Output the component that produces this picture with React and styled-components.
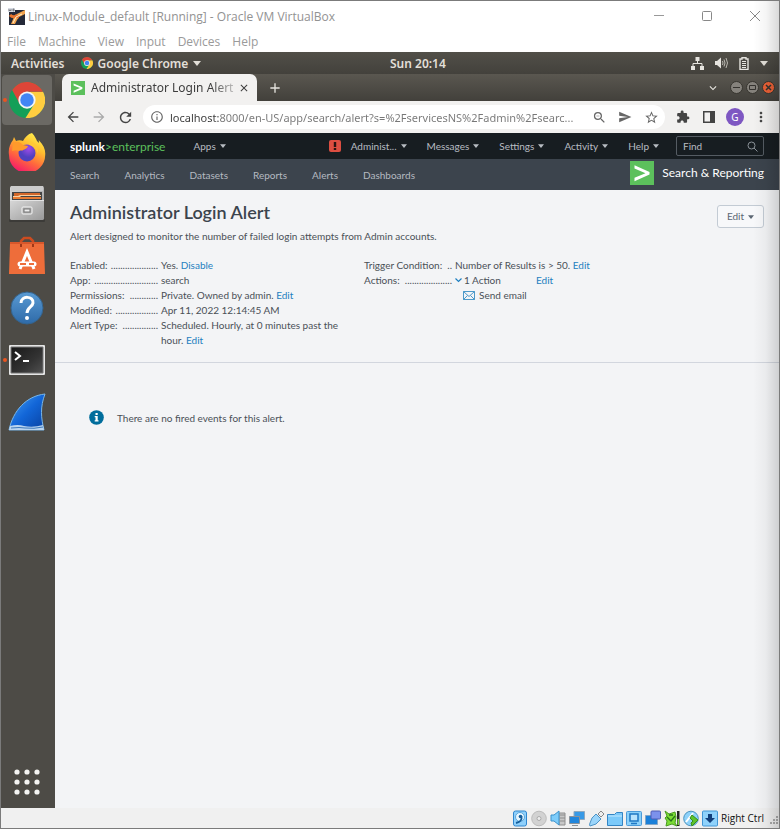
import React from "react";
import styled, { createGlobalStyle, css } from "styled-components";
import {
  MdArrowBack,
  MdArrowForward,
  MdRefresh,
  MdInfoOutline,
  MdZoomOut,
  MdSend,
  MdStarBorder,
  MdExtension,
  MdMoreVert,
  MdExpandMore,
  MdAdd,
  MdClose,
} from "react-icons/md";

const system = `"Open Sans", "Noto Sans", sans-serif`;
const ubuntu = `"Noto Sans", "Open Sans", sans-serif`;
const splunk = `Lato, "Open Sans", sans-serif`;

const GlobalStyle = createGlobalStyle`
  * { box-sizing: border-box; }
  body { margin: 0; background: #f0f0f0; }
  button, input { font: inherit; color: inherit; border: 0; padding: 0; margin: 0; background: none; }
  button { cursor: pointer; white-space: nowrap; }
  svg { display: block; flex: none; }
  h1, p, dl, dd, dt { margin: 0; font-weight: inherit; }
`;

/* ---------- virtual machine window ---------- */

const Window = styled.div`
  position: relative;
  display: flex;
  flex-direction: column;
  min-height: 100vh;
  border: 1px solid #7b7b7b;
  background: #fff;
  font-family: ${system};
`;

const EdgeShade = styled.div`
  position: absolute;
  inset: 0 0 0 auto;
  width: 26px;
  pointer-events: none;
  background: linear-gradient(to right, transparent, rgba(0, 0, 0, 0.04) 50%, rgba(0, 0, 0, 0.15));
`;

const TitleBar = styled.header`
  display: flex;
  align-items: center;
  height: 30px;
  padding: 0 18px 0 7px;
  gap: 3px;
  font-size: 12px;
  color: #929292;
`;

const TitleText = styled.span`
  flex: 1;
  white-space: nowrap;
`;

const WindowControls = styled.div`
  display: flex;
  gap: 36px;
  button { display: flex; }
`;

const MenuBar = styled.nav`
  display: flex;
  align-items: center;
  height: 21px;
  padding: 0 6px;
  gap: 12px;
  font-size: 12px;
  color: #9a9a9a;
`;

/* ---------- desktop ---------- */

const TopPanel = styled.div`
  display: grid;
  grid-template-columns: 1fr auto 0.85fr;
  align-items: center;
  height: 22px;
  padding: 0 11px 0 10px;
  background: linear-gradient(#514f48, #43413c);
  color: #e2dfd8;
  font: 600 12px ${ubuntu};
`;

const PanelGroup = styled.div`
  display: flex;
  align-items: center;
  gap: ${(p) => p.$gap}px;
  justify-content: ${(p) => (p.$end ? "flex-end" : "flex-start")};
`;

const PanelButton = styled.button`
  display: flex;
  align-items: center;
  gap: 5px;
`;

const Desktop = styled.div`
  display: flex;
  flex: 1;
`;

const Dock = styled.nav`
  display: flex;
  flex-direction: column;
  flex: none;
  width: 54px;
  padding: 1px 3px 1px 1px;
  gap: 2px;
  background: #4d4b46;
`;

const DockItem = styled.button`
  position: relative;
  display: flex;
  align-items: center;
  justify-content: center;
  height: 50px;
  border-radius: 4px;
  ${(p) => p.$active && css`background: #6b6964;`}
  ${(p) =>
    p.$running &&
    css`
      &::before {
        content: "";
        position: absolute;
        left: 1px;
        width: 4px;
        height: 4px;
        border-radius: 50%;
        background: #e95420;
      }
    `}
`;

const DockSpacer = styled.div`
  flex: 1;
`;

/* ---------- browser ---------- */

const Browser = styled.main`
  display: flex;
  flex-direction: column;
  flex: 1;
  min-width: 0;
  background: #f3f4f6;
`;

const TabStrip = styled.div`
  display: flex;
  align-items: center;
  height: 27px;
  padding: 0 4px 0 7px;
  background: linear-gradient(#5a5750, #42403b);
  color: #e6e4df;
`;

const Tab = styled.div`
  display: flex;
  align-items: center;
  width: 195px;
  height: 27px;
  padding: 0 7px 0 9px;
  border-radius: 7px 7px 0 0;
  background: #f2f1f0;
  color: #3d3d3d;
  font: 12px ${ubuntu};
`;

const TabTitle = styled.span`
  flex: 1;
  margin-left: 6px;
  white-space: nowrap;
  mask-image: linear-gradient(to right, #000 82%, rgba(0, 0, 0, 0.15));
`;

const IconButton = styled.button`
  display: flex;
  flex: none;
`;

const NewTab = styled(IconButton)`
  margin: 0 auto 0 10px;
`;

const FrameControls = styled.div`
  display: flex;
  align-items: center;
  gap: 3px;
  margin-left: 10px;
`;

const FrameButton = styled.button`
  display: flex;
  align-items: center;
  justify-content: center;
  width: 13px;
  height: 13px;
  border-radius: 50%;
  border: 1px solid #37352f;
  background: ${(p) => (p.$close ? "#ea6036" : "#85827c")};
  color: #35332f;
`;

const Toolbar = styled.div`
  display: flex;
  align-items: center;
  height: 32px;
  padding: 0 5px;
  gap: 5px;
  background: #f2f1f0;
  color: #444;
`;

const ToolGroup = styled.div`
  display: grid;
  grid-auto-flow: column;
  grid-auto-columns: 26px;
  align-items: center;
  justify-items: center;
`;

const AddressBar = styled.div`
  display: flex;
  align-items: center;
  flex: 1;
  min-width: 0;
  height: 24px;
  padding: 0 1px 0 7px;
  gap: 6px;
  border-radius: 12px;
  background: #fff;
  color: #666;
`;

const AddressInput = styled.input`
  flex: 1;
  min-width: 0;
  font: 11px ${ubuntu};
  background: linear-gradient(to right, #3a3a3a 49px, #777 49px);
  background-clip: text;
  -webkit-text-fill-color: transparent;
  outline: 0;
`;

const Profile = styled.button`
  width: 18px;
  height: 18px;
  border-radius: 50%;
  background: #7e57c2;
  color: #fff;
  font: 10px/18px ${ubuntu};
`;

/* ---------- splunk ---------- */

const SplunkBar = styled.div`
  display: flex;
  align-items: center;
  height: 26px;
  padding: 0 15px;
  background: #171d21;
  color: #b8bcc2;
  font: 10px ${splunk};
`;

const Logo = styled.a`
  display: flex;
  color: #fff;
  font: 700 12px ${splunk};
  text-decoration: none;
  margin-right: 28px;
  span { color: #5cc05c; font-weight: 400; }
`;

const BarMenus = styled.div`
  display: flex;
  align-items: center;
  gap: 20px;
  margin: 0 17px 0 auto;
`;

const DropButton = styled.button`
  display: flex;
  align-items: center;
  gap: 4px;
  white-space: nowrap;
`;

const Warning = styled.span`
  display: flex;
  align-items: center;
  justify-content: center;
  width: 12px;
  height: 12px;
  margin-right: -10px;
  border-radius: 2px;
  background: #dc4e41;
`;

const FindBox = styled.label`
  display: flex;
  align-items: center;
  width: 88px;
  height: 20px;
  padding: 0 5px 0 6px;
  border: 1px solid #555c63;
  border-radius: 2px;
  input { flex: 1; min-width: 0; outline: 0; }
  input::placeholder { color: #b8bcc2; opacity: 1; }
`;

const AppNav = styled.nav`
  display: flex;
  align-items: center;
  height: 31px;
  padding: 0 15px;
  gap: 25px;
  background: #3c444d;
  font: 10px ${splunk};
  a { color: #b5bac1; text-decoration: none; }
`;

const AppName = styled.div`
  display: flex;
  align-items: center;
  gap: 8px;
  margin: -4px 0 0 auto;
  color: #fff;
  font-size: 12px;
`;

const AlertHeader = styled.section`
  padding: 12px 15px 14px 15px;
  border-bottom: 1px solid #d2d6de;
  color: #4a5057;
  font: 10px/15px ${splunk};
`;

const HeadingRow = styled.div`
  display: flex;
  justify-content: space-between;
  align-items: flex-start;
`;

const Heading = styled.h1`
  color: #3c444d;
  font: 600 18px/20px ${splunk};
`;

const EditButton = styled(DropButton)`
  justify-content: center;
  width: 47px;
  height: 23px;
  margin-top: 3px;
  border: 1px solid #c3cbd4;
  border-radius: 3px;
  background: #f7f8fa;
  color: #5c6773;
`;

const Description = styled.p`
  margin: 1px 0 14px;
`;

const Details = styled.div`
  display: grid;
  grid-template-columns: 294px 1fr;
  align-items: start;
`;

const DetailList = styled.dl`
  display: grid;
  grid-template-columns: 88px minmax(0, 190px);
  column-gap: 3px;
`;

const Term = styled.dt`
  display: flex;
  justify-content: space-between;
  white-space: nowrap;
`;

const Link = styled.a`
  color: #1e7fc0;
  text-decoration: none;
`;

const ActionLine = styled.div`
  display: flex;
  align-items: center;
  gap: 2px;
`;

const ActionName = styled.span`
  width: 70px;
`;

const EmailLine = styled(ActionLine)`
  padding-left: 8px;
  gap: 4px;
`;

const EmptyNotice = styled.div`
  display: flex;
  align-items: center;
  gap: 13px;
  padding: 47px 34px;
  color: #4a5057;
  font: 10px ${splunk};
`;

/* ---------- status bar ---------- */

const StatusBar = styled.footer`
  display: flex;
  align-items: center;
  justify-content: flex-end;
  height: 20px;
  gap: 3px;
  background: #f0f0f0;
  color: #111;
  font-size: 10px;
`;

const HostKey = styled.span`
  margin-right: 3px;
`;

/* ---------- drawings ---------- */

const Caret = ({ size = 6 }) => (
  <svg width={size} height={size / 2 + 1} viewBox="0 0 8 5" fill="currentColor">
    <path d="M0 0h8L4 5z" />
  </svg>
);

const ChromeIcon = ({ size }) => (
  <svg width={size} height={size} viewBox="0 0 48 48">
    <circle cx="24" cy="24" r="24" fill="#149f58" />
    <path d="M24 13H45.4A24 24 0 0 1 22 48L33.5 29.5z" fill="#ffcd40" />
    <path d="M24 13H45.4A24 24 0 0 0 4.2 10.5L14.5 29.5z" fill="#dd4538" />
    <circle cx="24" cy="24" r="11.5" fill="#f4f4f4" />
    <circle cx="24" cy="24" r="9" fill="#4285f4" />
  </svg>
);

const SplunkTile = ({ size }) => (
  <svg width={size} height={size} viewBox="0 0 24 24">
    <path fill="#5cc05c" d="M0 0h24v24H0z" />
    <path d="M4.500 4.200v3.400L15.500 12.200 4.500 16.800v3.400L19.500 13.500v-2.600z" fill="#fff" />
  </svg>
);

const VirtualBoxIcon = () => (
  <svg width="17" height="17" viewBox="0 0 17 17">
    <path fill="#242938" d="M1 2h16v15H1z" />
    <path d="M3 16 6 9l3-3 8-4v4l-6 3-2 3-2 4z" fill="#f3a44e" />
    <path d="M2 7q3 3 6 1l3 1" stroke="#e8752e" strokeWidth="3" fill="none" />
    <path d="m5 15 3-6 6-3" stroke="#fff0cb" fill="none" />
    <path fill="#d6dbe4" d="M0 0h7v4H0z" />
    <path d="M1 1v2l1-1 1 1V1m2 0h1v2H5z" stroke="#555" strokeWidth=".6" fill="none" />
  </svg>
);

const FirefoxIcon = () => (
  <svg width="38" height="38" viewBox="0 0 38 38">
    <defs>
      <linearGradient id="fox" x1=".8" y1="0" x2=".3" y2="1">
        <stop offset="0" stopColor="#fff44f" />
        <stop offset=".35" stopColor="#ffbd2f" />
        <stop offset=".65" stopColor="#ff6a3c" />
        <stop offset="1" stopColor="#f5156c" />
      </linearGradient>
      <radialGradient id="globe" cx=".6" cy=".25">
        <stop offset="0" stopColor="#a04be8" />
        <stop offset="1" stopColor="#5040c0" />
      </radialGradient>
    </defs>
    <path d="M24 0c3 3 4 6 5 8l2 2-.3-3c5 5 7 10 6.500 15A18 18 0 0 1 1 22C0 16 2 11 5 7l1-3 2 4c2-1 5-1 7 0 2-4 5-7 9-8z" fill="url(#fox)" />
    <circle cx="19" cy="20" r="8.500" fill="url(#globe)" />
    <path d="M5 9c4-1 8 0 10 3l5 1c-1 3-3 3-5 4 0 1-2 0-4 1-2-1-4-1-7 0z" fill="#ff9a2b" />
    <path d="M20 8c6 0 11 5 10 13-1-5-4-8-9-9 1-1 0-3-1-4z" fill="#ffc936" />
  </svg>
);

const FilesIcon = () => (
  <svg width="36" height="38" viewBox="0 0 36 38">
    <defs>
      <linearGradient id="cabinet" x2="1" y2="1">
        <stop stopColor="#d8d8d8" />
        <stop offset="1" stopColor="#999" />
      </linearGradient>
    </defs>
    <rect y="34" width="36" height="3" rx="1" fill="#3c3b38" />
    <rect x="1" y="1" width="34" height="34" rx="2" fill="url(#cabinet)" />
    <path fill="#ccc" d="M2 1h32v5H2z" />
    <path fill="#444" d="M3 7h30v9H3z" />
    <path fill="#d5682a" d="M5 8h26v3H5z" />
    <path fill="#f7d1a4" d="M4 11h5l2-1h21v1H12l-2 2H4z" />
    <path fill="#ea7c33" d="M4 12h28v2H4z" />
    <path fill="url(#cabinet)" d="M1 15h34v18q0 2-2 2H3q-2 0-2-2z" />
    <path fill="#e4e4e4" d="M1 15h34v1H1z" />
    <rect x="13" y="22" width="10" height="7" rx="1" fill="#aaa" stroke="#f4f4f4" />
    <rect x="15" y="24" width="6" height="3" fill="#eee" stroke="#777" />
  </svg>
);

const SoftwareIcon = () => (
  <svg width="36" height="40" viewBox="0 0 36 40">
    <path d="M12 11V5l3-3h6l3 3v6" fill="none" stroke="#cc4c20" strokeWidth="2.500" />
    <path d="M1 6h34v9H1z" fill="#d8572b" />
    <path d="M1 8h34l1 30H0z" fill="#ee6d3a" />
    <path d="M12 11V8m12 3V8" stroke="#9f3818" strokeWidth="2" />
    <path d="m11 33 7-17 7 17" fill="none" stroke="#fff" strokeWidth="3" />
    <path d="M11 28h14" stroke="#fff" strokeWidth="5" strokeLinecap="round" />
    <path d="M11 28h6m3 0h5" stroke="#ee6d3a" strokeWidth="2" />
  </svg>
);

const HelpIcon = () => (
  <svg width="34" height="34" viewBox="0 0 34 34">
    <defs>
      <linearGradient id="help" x2="0" y2="1">
        <stop stopColor="#5a9bd4" />
        <stop offset="1" stopColor="#2e6aa8" />
      </linearGradient>
    </defs>
    <circle cx="17" cy="17" r="16" fill="url(#help)" stroke="#34648f" />
    <path d="M11 12c0-8 13-7 12 0-.5 4-6 4-6 10" stroke="#fff" strokeWidth="3" fill="none" />
    <circle cx="17" cy="27" r="2" fill="#fff" />
  </svg>
);

const TerminalIcon = () => (
  <svg width="38" height="32" viewBox="0 0 38 32">
    <defs>
      <linearGradient id="screen" x2="1" y2="1">
        <stop stopColor="#181818" />
        <stop offset=".6" stopColor="#333" />
        <stop offset="1" stopColor="#505050" />
      </linearGradient>
    </defs>
    <rect x="1" y="1" width="36" height="30" rx="1" fill="#e5e5e5" />
    <path fill="url(#screen)" stroke="#777" d="M3 3h32v26H3z" />
    <path d="m7 8 5 4-5 4m8 1h6" fill="none" stroke="#fff" strokeWidth="2" />
  </svg>
);

const WiresharkIcon = () => (
  <svg width="38" height="38" viewBox="0 0 38 38">
    <defs>
      <linearGradient id="fin" x2="1" y2="1">
        <stop stopColor="#4aa3f5" />
        <stop offset=".5" stopColor="#1266d8" />
        <stop offset="1" stopColor="#08409f" />
      </linearGradient>
    </defs>
    <path d="M1 37C5 18 18 3 37 1c-5 13-4 24-1 36z" fill="url(#fin)" stroke="#78b6e8" />
    <path d="M2 33q8-2 14 0 9 2 19-1l1 5H1z" fill="#b9d4ef" />
    <path d="M3 35q9-1 14 0 9 1 18-1" stroke="#3c78bb" fill="none" />
  </svg>
);

const AppsGrid = () => (
  <svg width="26" height="26" viewBox="0 0 26 26" fill="#f5f5f3">
    {[3, 13, 23].map((y) => [3, 13, 23].map((x) => <circle key={`${x}-${y}`} cx={x} cy={y} r="2.600" />))}
  </svg>
);

const NetworkIcon = () => (
  <svg width="13" height="13" viewBox="0 0 13 13" fill="#e6e4df">
    <path d="M4.500 0h4v4h-4zM0 9h4v4H0zM9 9h4v4H9z" />
    <path d="M6.500 4v3M2 9V6.500h9V9" fill="none" stroke="#e6e4df" />
  </svg>
);

const SpeakerIcon = () => (
  <svg width="13" height="12" viewBox="0 0 13 12">
    <path d="M0 4h2l4-3.500v11L2 8H0z" fill="#e6e4df" />
    <path d="M7.500 4q1 2 0 4M9 2.500q2 3.500 0 7M11 1q3 5 0 10" stroke="#bbb8b1" fill="none" />
  </svg>
);

const BatteryIcon = () => (
  <svg width="10" height="13" viewBox="0 0 10 13" fill="none" stroke="#e6e4df">
    <path d="M1 2h2V.700h4V2h2v10.500H1z" strokeWidth="1.400" />
    <path d="M3 4.500h4M3 6.500h4M3 8.500h4M3 10.500h4" />
  </svg>
);

const PanelIcon = () => (
  <svg width="12" height="12" viewBox="0 0 12 12">
    <path d="M.750.750h10.500v10.500H.750z" fill="none" stroke="#444" strokeWidth="1.500" />
    <path d="M7 1h4v10H7z" fill="#444" />
  </svg>
);

const SearchGlyph = () => (
  <svg width="11" height="11" viewBox="0 0 11 11" fill="none" stroke="#8b9298">
    <circle cx="4.500" cy="4.500" r="3.500" />
    <path d="m7 7 3.500 3.500" />
  </svg>
);

const InfoBadge = () => (
  <svg width="15" height="15" viewBox="0 0 15 15">
    <circle cx="7.500" cy="7.500" r="7.300" fill="#006d9c" />
    <path d="M6.500 3h2.200v2H6.500zM5.700 6h3v4.300h.8v1.200H5.700v-1.200h.8V7.200h-.8z" fill="#fff" />
  </svg>
);

const Envelope = () => (
  <svg width="12" height="9" viewBox="0 0 12 9" fill="none" stroke="#3a8fc4" strokeWidth=".9">
    <path d="M.5.5h11v8H.5zM.5.500 6 5.500l5.500-5M.5 8.500l4-4m7 4-4-4" />
  </svg>
);

const Device = ({ children }) => (
  <svg width="16" height="17" viewBox="0 0 16 17">
    {children}
  </svg>
);

const DeviceIcons = () => (
  <>
    <Device>
      <rect x="1.500" y="1" width="13" height="15" rx="2" fill="#8fd0fb" stroke="#2f86cf" />
      <circle cx="8" cy="7" r="4.500" fill="#e8f6ff" stroke="#5ba6dc" />
      <circle cx="8.500" cy="6.500" r="1.800" fill="#155f9d" />
      <path d="M9.500 6.500q1 5-5.500 6.500" stroke="#155f9d" strokeWidth="1.800" fill="none" />
    </Device>
    <Device>
      <circle cx="8" cy="8.500" r="7.300" fill="#d2d2d2" stroke="#bbb" />
      <circle cx="8" cy="8.500" r="2" fill="#eee" stroke="#aaa" />
    </Device>
    <Device>
      <path d="M9 3h6v12H9zM10 5h5m-5 3h5m-5 3h5" fill="#c7c7c7" stroke="#8e8e8e" />
      <path d="M1 5h3l5-4v14l-5-4H1z" fill="#7dccfa" stroke="#3b91cb" />
    </Device>
    <Device>
      <path d="M5 1.500h10.500v8H5z" fill="#3799e6" stroke="#8fa9bf" />
      <path d="M.500 6.500h10v7h-10zM3 15.500h6" fill="#2186dc" stroke="#8b9299" />
    </Device>
    <Device>
      <path d="m10 4 3-3 3 3-3 3z" fill="#eee" stroke="#888" />
      <path d="m8 4 5 5-5 5q-3 1-6 2-1-1 0-3l2-5z" fill="#9bd5fa" stroke="#4c94c7" />
    </Device>
    <Device>
      <path d="M.500 4.500h7l2-2h6v13H.500z" fill="#7ccafa" stroke="#3485c4" />
      <path d="M1 6h14" stroke="#c3e9ff" />
    </Device>
    <Device>
      <rect x=".500" y="1.500" width="15" height="14" rx="1" fill="#8bd1fa" stroke="#4a9ad8" />
      <path d="M4 4h8v7H4zM5 13.500h6" fill="#b8e3fc" stroke="#1f78c4" strokeWidth="1.500" />
    </Device>
    <Device>
      <path d="M.500 5.500h12v9h-12z" fill="#1a80d9" stroke="#83a7c7" />
      <rect x="6" y="1" width="9.500" height="8" rx="1" fill="#7c91ec" stroke="#505db5" />
    </Device>
    <Device>
      <path d="M1 1l4 3 6-2 1 5-1 6 2 3-5-2-6 2 1-5-2-3 2-2z" fill="#7bdc35" stroke="#4a9a22" />
      <path d="m3 7 4 4 4-5M5 5h4" fill="none" stroke="#27731a" strokeWidth="1.300" />
      <path d="M13 1h2.500v15H13z" fill="#222" />
      <path d="M13.500 9h1.500v6h-1.500z" fill="#76d33b" />
    </Device>
    <Device>
      <circle cx="8" cy="8.500" r="7.300" fill="#8ed2fa" stroke="#4c94bf" />
      <path d="m3 12 7-9" stroke="#fff" strokeWidth="2" />
      <path d="m9 5 6 5-6 6-1-3 2-2-3-3z" fill="#5dc42c" stroke="#398d1b" />
    </Device>
    <Device>
      <rect x=".500" y="1" width="15" height="15" rx="1" fill="#8fd2fb" stroke="#4196d6" />
      <path d="M6 4h4v4h3l-5 5-5-5h3z" fill="#123f7b" />
    </Device>
  </>
);

const ResizeGrip = () => (
  <svg width="9" height="14" viewBox="0 0 9 14" fill="#aaa">
    <path d="M6 5h2v2H6zM3 8h2v2H3zM6 8h2v2H6zM0 11h2v2H0zM3 11h2v2H3zM6 11h2v2H6z" />
  </svg>
);

/* ---------- page ---------- */

const Detail = ({ label, dots, children }) => (
  <>
    <Term>
      <span>{label}</span>
      <span aria-hidden="true">{".".repeat(dots)}</span>
    </Term>
    <dd>{children}</dd>
  </>
);

const Drop = ({ children }) => (
  <DropButton>
    {children}
    <Caret />
  </DropButton>
);

export default function App() {
  return (
    <Window>
      <GlobalStyle />
      <TitleBar>
        <VirtualBoxIcon />
        <TitleText>Linux-Module_default [Running] - Oracle VM VirtualBox</TitleText>
        <WindowControls>
          <button aria-label="Minimize">
            <svg width="12" height="12" fill="none" stroke="#999"><path d="M1 5.500h10" /></svg>
          </button>
          <button aria-label="Maximize">
            <svg width="12" height="12" fill="none" stroke="#888"><rect x="1.500" y="1.500" width="9" height="9" rx="1" /></svg>
          </button>
          <button aria-label="Close">
            <svg width="12" height="12" fill="none" stroke="#888"><path d="m1 1 10 10M11 1 1 11" /></svg>
          </button>
        </WindowControls>
      </TitleBar>
      <MenuBar>
        {["File", "Machine", "View", "Input", "Devices", "Help"].map((name) => (
          <button key={name}>{name}</button>
        ))}
      </MenuBar>

      <TopPanel>
        <PanelGroup $gap={16}>
          <PanelButton>Activities</PanelButton>
          <PanelButton>
            <ChromeIcon size={12} />
            Google Chrome
            <Caret size={8} />
          </PanelButton>
        </PanelGroup>
        <span>Sun 20:14</span>
        <PanelGroup $gap={11} $end>
          <NetworkIcon />
          <SpeakerIcon />
          <BatteryIcon />
          <Caret size={8} />
        </PanelGroup>
      </TopPanel>

      <Desktop>
        <Dock>
          <DockItem $active $running aria-label="Google Chrome"><ChromeIcon size={36} /></DockItem>
          <DockItem aria-label="Firefox"><FirefoxIcon /></DockItem>
          <DockItem aria-label="Files"><FilesIcon /></DockItem>
          <DockItem aria-label="Ubuntu Software"><SoftwareIcon /></DockItem>
          <DockItem aria-label="Help"><HelpIcon /></DockItem>
          <DockItem $running aria-label="Terminal"><TerminalIcon /></DockItem>
          <DockItem aria-label="Wireshark"><WiresharkIcon /></DockItem>
          <DockSpacer />
          <DockItem aria-label="Show applications"><AppsGrid /></DockItem>
        </Dock>

        <Browser>
          <TabStrip>
            <Tab>
              <SplunkTile size={14} />
              <TabTitle>Administrator Login Alert</TabTitle>
              <IconButton aria-label="Close tab"><MdClose size={12} /></IconButton>
            </Tab>
            <NewTab aria-label="New tab"><MdAdd size={16} /></NewTab>
            <IconButton aria-label="Search tabs"><MdExpandMore size={14} /></IconButton>
            <FrameControls>
              <FrameButton aria-label="Minimize browser">
                <svg width="7" height="7" stroke="currentColor"><path d="M0 3.500h7" /></svg>
              </FrameButton>
              <FrameButton aria-label="Maximize browser">
                <svg width="7" height="7" stroke="currentColor" fill="none"><path d="M.5 1.500h6v4h-6z" /></svg>
              </FrameButton>
              <FrameButton $close aria-label="Close browser">
                <svg width="7" height="7" stroke="currentColor" strokeWidth="1.500"><path d="m1 1 5 5M6 1 1 6" /></svg>
              </FrameButton>
            </FrameControls>
          </TabStrip>

          <Toolbar>
            <ToolGroup>
              <IconButton aria-label="Back"><MdArrowBack size={16} /></IconButton>
              <IconButton aria-label="Forward"><MdArrowForward size={16} color="#aaa" /></IconButton>
              <IconButton aria-label="Reload"><MdRefresh size={17} /></IconButton>
            </ToolGroup>
            <AddressBar>
              <MdInfoOutline size={14} />
              <AddressInput
                aria-label="Address"
                defaultValue="localhost:8000/en-US/app/search/alert?s=%2FservicesNS%2Fadmin%2Fsearc..."
              />
              <ToolGroup>
                <IconButton aria-label="Zoom"><MdZoomOut size={15} /></IconButton>
                <IconButton aria-label="Share"><MdSend size={14} /></IconButton>
                <IconButton aria-label="Bookmark"><MdStarBorder size={15} /></IconButton>
              </ToolGroup>
            </AddressBar>
            <ToolGroup>
              <IconButton aria-label="Extensions"><MdExtension size={14} /></IconButton>
              <IconButton aria-label="Side panel"><PanelIcon /></IconButton>
              <Profile aria-label="Profile">G</Profile>
              <IconButton aria-label="More"><MdMoreVert size={16} /></IconButton>
            </ToolGroup>
          </Toolbar>

          <SplunkBar>
            <Logo href="#home">splunk<span>&gt;enterprise</span></Logo>
            <Drop>Apps</Drop>
            <BarMenus>
              <Warning>
                <svg width="4" height="8" fill="#2a1412"><path d="M.800 0h2.400v5H.800zM.800 6h2.400v2H.800z" /></svg>
              </Warning>
              <Drop>Administ...</Drop>
              <Drop>Messages</Drop>
              <Drop>Settings</Drop>
              <Drop>Activity</Drop>
              <Drop>Help</Drop>
            </BarMenus>
            <FindBox>
              <input placeholder="Find" aria-label="Find" />
              <SearchGlyph />
            </FindBox>
          </SplunkBar>

          <AppNav>
            {["Search", "Analytics", "Datasets", "Reports", "Alerts", "Dashboards"].map((name) => (
              <a key={name} href={`#${name.toLowerCase()}`}>{name}</a>
            ))}
            <AppName>
              <SplunkTile size={24} />
              Search &amp; Reporting
            </AppName>
          </AppNav>

          <AlertHeader>
            <HeadingRow>
              <Heading>Administrator Login Alert</Heading>
              <EditButton>Edit<Caret /></EditButton>
            </HeadingRow>
            <Description>
              Alert designed to monitor the number of failed login attempts from Admin accounts.
            </Description>
            <Details>
              <DetailList>
                <Detail label="Enabled:" dots={20}>Yes. <Link href="#disable">Disable</Link></Detail>
                <Detail label="App:" dots={27}>search</Detail>
                <Detail label="Permissions:" dots={12}>Private. Owned by admin. <Link href="#permissions">Edit</Link></Detail>
                <Detail label="Modified:" dots={18}>Apr 11, 2022 12:14:45 AM</Detail>
                <Detail label="Alert Type:" dots={15}>Scheduled. Hourly, at 0 minutes past the hour. <Link href="#schedule">Edit</Link></Detail>
              </DetailList>
              <DetailList>
                <Detail label="Trigger Condition:" dots={2}>Number of Results is &gt; 50. <Link href="#trigger">Edit</Link></Detail>
                <Detail label="Actions:" dots={20}>
                  <ActionLine>
                    <svg width="7" height="5" fill="none" stroke="#1e7fc0" strokeWidth="1.200"><path d="m.5.500 3 3 3-3" /></svg>
                    <ActionName>1 Action</ActionName>
                    <Link href="#actions">Edit</Link>
                  </ActionLine>
                  <EmailLine><Envelope />Send email</EmailLine>
                </Detail>
              </DetailList>
            </Details>
          </AlertHeader>

          <EmptyNotice>
            <InfoBadge />
            There are no fired events for this alert.
          </EmptyNotice>
        </Browser>
      </Desktop>

      <StatusBar>
        <DeviceIcons />
        <HostKey>Right Ctrl</HostKey>
        <ResizeGrip />
      </StatusBar>
      <EdgeShade />
    </Window>
  );
}
